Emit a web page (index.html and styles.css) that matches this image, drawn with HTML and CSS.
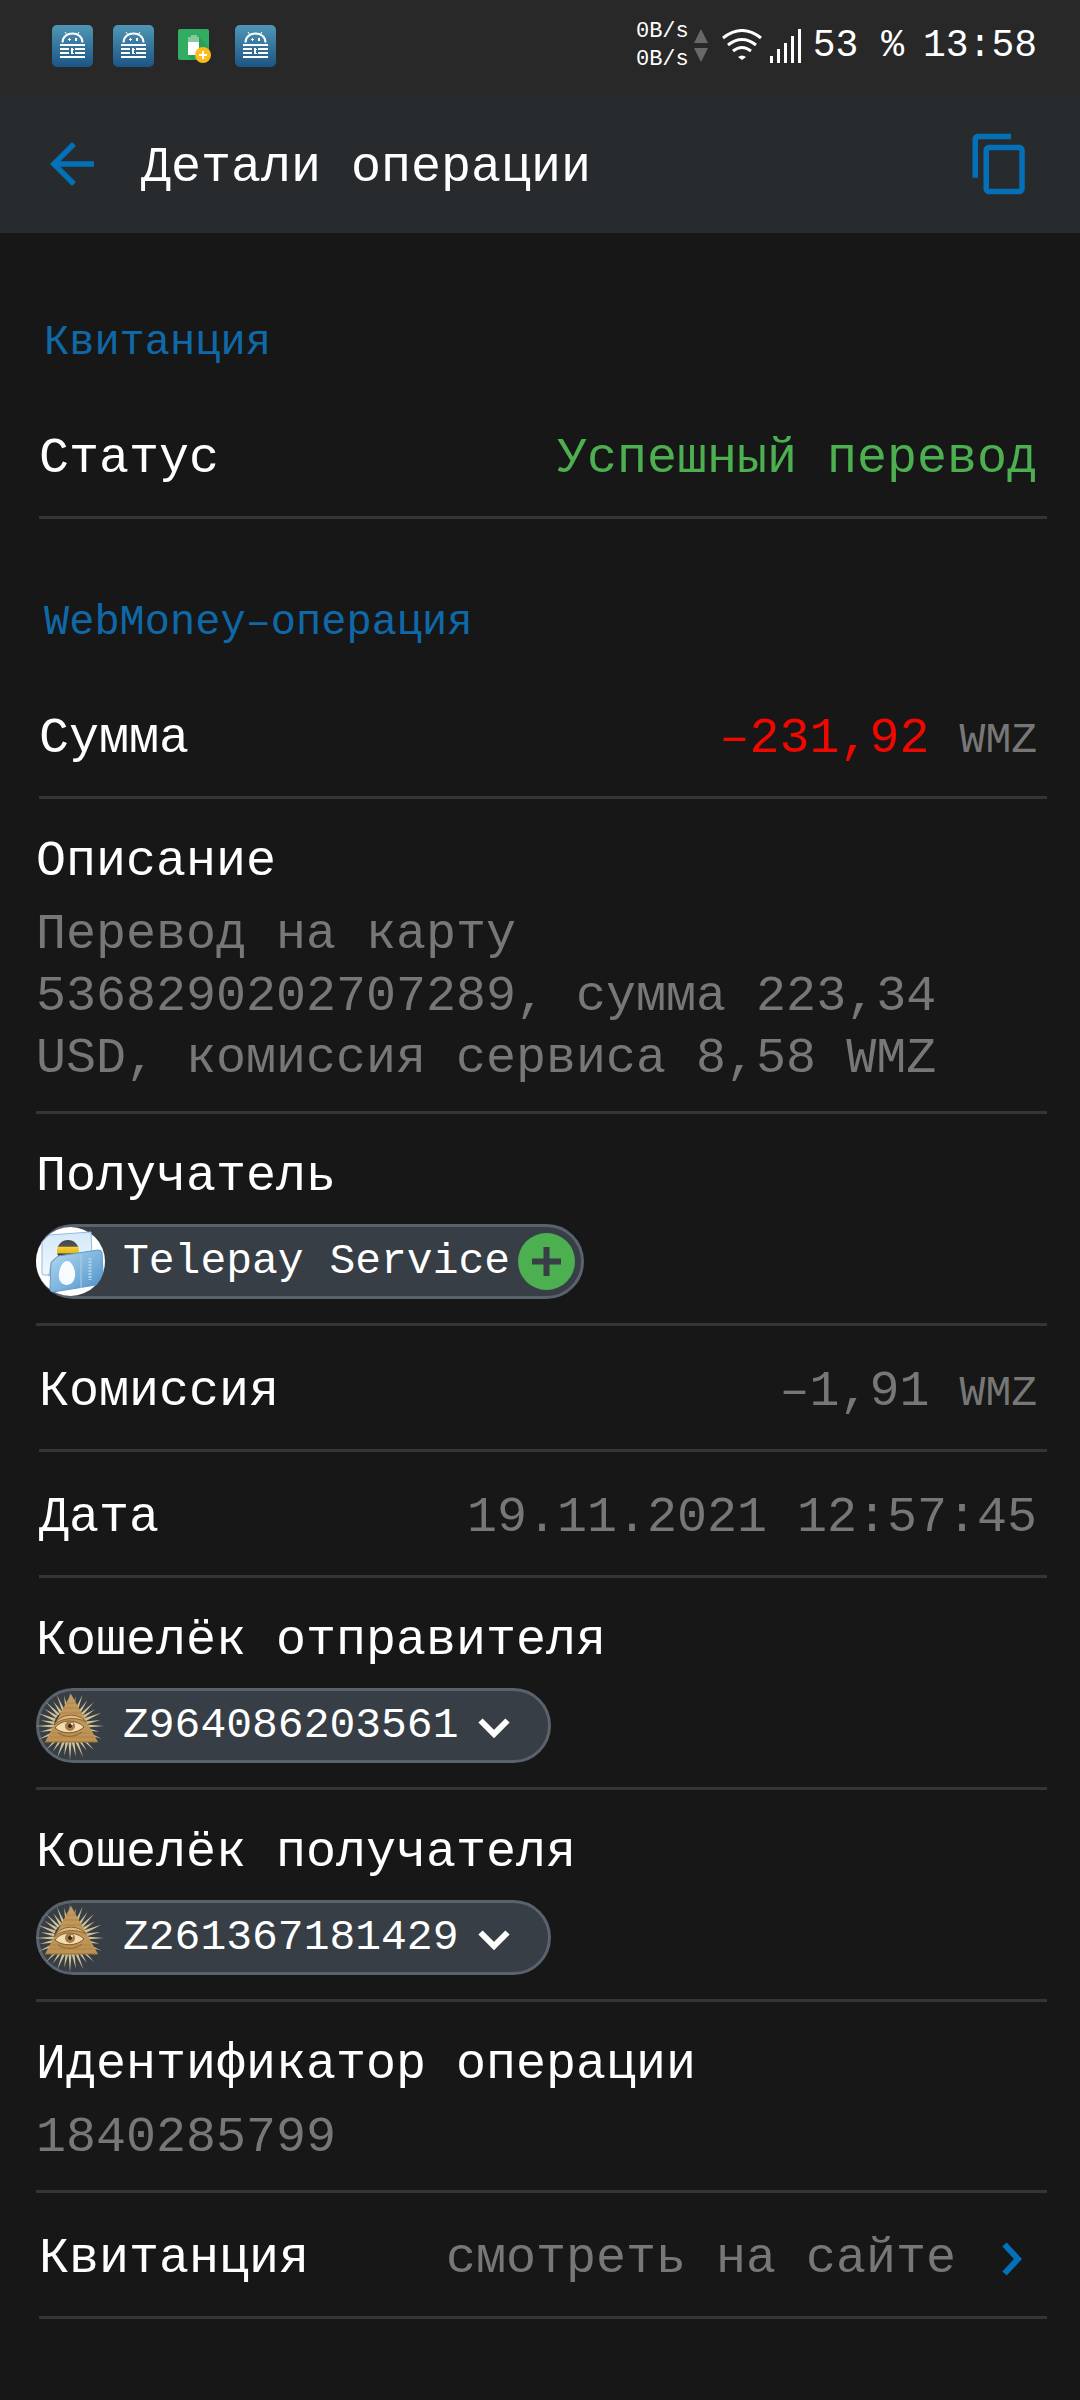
FILE: index.html
```html
<!DOCTYPE html>
<html lang="ru">
<head>
<meta charset="utf-8">
<meta name="viewport" content="width=device-width, initial-scale=1">
<title>Детали операции</title>
<link rel="stylesheet" href="styles.css">
</head>
<body>
<svg class="sprite" aria-hidden="true">
  <defs>
    <linearGradient id="keyboard-bg" x1="0" y1="0" x2="0" y2="1">
      <stop offset="0" stop-color="#4f97b5"/>
      <stop offset="1" stop-color="#1c5585"/>
    </linearGradient>
    <linearGradient id="card-front" x1="0" y1="0" x2="1" y2="1">
      <stop offset="0" stop-color="#b5daf3"/>
      <stop offset="0.6" stop-color="#76afd9"/>
      <stop offset="1" stop-color="#4a8cc4"/>
    </linearGradient>
    <linearGradient id="card-back" x1="0" y1="0" x2="0" y2="1">
      <stop offset="0" stop-color="#d3e9f9"/>
      <stop offset="1" stop-color="#f2f8fc"/>
    </linearGradient>
    <linearGradient id="bee" x1="0" y1="0" x2="0" y2="1">
      <stop offset="0" stop-color="#444"/>
      <stop offset="0.28" stop-color="#555"/>
      <stop offset="0.34" stop-color="#f4cf35"/>
      <stop offset="0.58" stop-color="#e9b91c"/>
      <stop offset="0.64" stop-color="#3b3b38"/>
      <stop offset="0.78" stop-color="#4a4637"/>
      <stop offset="0.84" stop-color="#e9b91c"/>
      <stop offset="1" stop-color="#c89a1c"/>
    </linearGradient>
    <linearGradient id="stone" x1="0" y1="0" x2="0" y2="1">
      <stop offset="0" stop-color="#c39a5e"/>
      <stop offset="1" stop-color="#bd9152"/>
    </linearGradient>
    <g id="rays">
      <path d="M-1.500 -16L0 -34L1.500 -16Z"/>
      <path d="M-1.500 -16L0 -30L1.500 -16Z" transform="rotate(11)"/>
      <path d="M-1.500 -16L0 -34L1.500 -16Z" transform="rotate(22)"/>
      <path d="M-1.500 -16L0 -31L1.500 -16Z" transform="rotate(34)"/>
    </g>
    <symbol id="keyboard" viewBox="0 0 41 42">
      <rect width="41" height="42" rx="5" fill="url(#keyboard-bg)"/>
      <path d="M10.500 17.500C10.500 5.500 30.500 5.500 30.500 17.500" fill="none" stroke="#fff" stroke-width="2"/>
      <path d="M13 7l2 3M27 7l-2 3" stroke="#fff" stroke-width="1"/>
      <path d="M16 14h3v1h-3zM17 13h1v3h-1zM23 13h2v3h-2zM8 19h25v2H8zM8 23h9v2H8zM23 23h10v2H23zM8 27h9v2H8zM23 27h10v2H23zM8 31h25v2H8zM19 23h2v6h-2zM21 24h1v1h-1zM21 28h1v1h-1z" fill="#fff"/>
    </symbol>
    <symbol id="pyramid" viewBox="0 0 69 69">
      <g fill="#cfc294" transform="translate(34 35)">
        <use href="#rays"/>
        <use href="#rays" transform="rotate(45)"/>
        <use href="#rays" transform="rotate(90)"/>
        <use href="#rays" transform="rotate(135)"/>
        <use href="#rays" transform="rotate(180)"/>
        <use href="#rays" transform="rotate(225)"/>
        <use href="#rays" transform="rotate(270)"/>
        <use href="#rays" transform="rotate(315)"/>
      </g>
      <path d="M35 3L62 51H9Z" fill="url(#stone)"/>
      <path d="M30 12h10M27 17h16M24 22h22M16 42h38M14 46h44" stroke="#a27a42" stroke-width="1" opacity=".6"/>
      <path d="M9 51h53" stroke="#8f6c3c" stroke-width="1"/>
      <path d="M18 34C24 22 42 21 50 31C42 26 26 26 18 34Z" fill="#ddbd86" stroke="#8a6230" stroke-width="1"/>
      <path d="M19 37C25 28 40 28 48 36C41 43 27 44 19 37Z" fill="#f0dcae" stroke="#7d572c" stroke-width="1"/>
      <circle cx="34" cy="35" r="5" fill="#a57b48"/>
      <circle cx="34" cy="35" r="2" fill="#3b2817"/>
      <circle cx="36" cy="33" r="1" fill="#fff"/>
      <path d="M22 42C30 47 40 46 46 41" fill="none" stroke="#8a6230" stroke-width="1"/>
    </symbol>
    <symbol id="chevron-down" viewBox="0 0 32 20">
      <path d="M2.500 2.500L16 16L29.500 2.500" fill="none" stroke="#fff" stroke-width="6"/>
    </symbol>
  </defs>
</svg>

<div class="status-bar">
  <div class="notifications" aria-hidden="true">
    <svg class="notification"><use href="#keyboard"/></svg>
    <svg class="notification"><use href="#keyboard"/></svg>
    <svg class="notification" viewBox="-4 -4 41 42">
      <rect x="0" y="0" width="31" height="31" rx="2" fill="#30ad63"/>
      <path d="M21 8l10 10v13H14L10 26z" fill="#27a05a"/>
      <path d="M13 6h6v2h2v5H10V8h3z" fill="#88c99f"/>
      <rect x="10" y="13" width="11" height="13" fill="#fff"/>
      <circle cx="25" cy="26" r="8" fill="#fbbc1c"/>
      <path d="M21 26h8M25 22v8" stroke="#fff" stroke-width="2"/>
    </svg>
    <svg class="notification"><use href="#keyboard"/></svg>
  </div>
  <div class="system">
    <div class="speed"><span>0B/s</span><span>0B/s</span></div>
    <svg class="traffic" viewBox="0 0 14 34" aria-hidden="true"><path d="M7 0l7 14H0zM0 19h14L7 33z" fill="#686868"/></svg>
    <svg class="wifi" viewBox="0 0 40 34" aria-hidden="true">
      <g fill="none" stroke="#fff" stroke-width="3">
        <path d="M1 9Q20 -6 39 9"/>
        <path d="M6 16Q20 5 34 16"/>
        <path d="M11 22Q20 15 29 22"/>
      </g>
      <path d="M16 28Q20 25 24 28L20 31Z" fill="#fff"/>
    </svg>
    <svg class="signal" viewBox="0 0 32 34" aria-hidden="true"><path d="M0 27h3v7H0zM7 20h3v14H7zM14 14h3v20h-3zM21 7h3v27h-3zM28 0h3v34h-3z" fill="#fff"/></svg>
    <span class="battery">53 %</span>
    <time class="clock">13:58</time>
  </div>
</div>

<header class="app-bar">
  <button class="icon-button" type="button" aria-label="Назад">
    <svg class="icon" viewBox="0 0 24 24"><path d="M20 11H7.830l5.590-5.590L12 4l-8 8 8 8 1.410-1.410L7.830 13H20v-2z"/></svg>
  </button>
  <h1 class="title">Детали операции</h1>
  <button class="icon-button" type="button" aria-label="Копировать">
    <svg class="icon" viewBox="0 0 24 24"><path d="M16 1H4c-1.100 0-2 .9-2 2v14h2V3h12V1zm3 4H8c-1.100 0-2 .9-2 2v14c0 1.100.9 2 2 2h11c1.100 0 2-.9 2-2V7c0-1.100-.9-2-2-2zm0 16H8V7h11v14z"/></svg>
  </button>
</header>

<main class="details">
  <section>
    <h2 class="section-title">Квитанция</h2>
    <dl class="list">
      <div class="row">
        <dt>Статус</dt>
        <dd class="success">Успешный перевод</dd>
      </div>
    </dl>
  </section>
  <section>
    <h2 class="section-title">WebMoney–операция</h2>
    <dl class="list">
      <div class="row">
        <dt>Сумма</dt>
        <dd><span class="debit">–231,92</span> <span class="currency">WMZ</span></dd>
      </div>
      <div class="row stacked">
        <dt>Описание</dt>
        <dd class="description">Перевод на карту 5368290202707289, сумма 223,34 USD, комиссия сервиса 8,58 WMZ</dd>
      </div>
      <div class="row stacked">
        <dt>Получатель</dt>
        <dd class="chip-value">
          <button class="chip contact" type="button">
            <svg class="avatar" viewBox="0 0 69 69" aria-hidden="true">
              <circle cx="34.500" cy="34.500" r="34.500" fill="#fff"/>
              <path d="M6 15L13 8L55 5L56 30L16 48H8Q6 48 6 46Z" fill="url(#card-back)" stroke="#93bbe0" stroke-width="1"/>
              <path d="M12 50L15 34L24 27L42 25L30 34Z" fill="#8296a8" opacity=".5"/>
              <circle cx="32" cy="24" r="11" fill="url(#bee)"/>
              <path d="M15 36L22 29L62 23Q66 23 66 26L67 45Q65 53 60 58L17 65Q14 65 14 62Z" fill="url(#card-front)" stroke="#5c9bd0" stroke-width="1"/>
              <path d="M45 27V61" stroke="#a9d0ee" stroke-width="1"/>
              <path d="M54 31V53" stroke="#a9d0ee" stroke-width="3" stroke-dasharray="2 1"/>
              <path d="M31 34C36 34 40 43 39 49C38 60 25 61 23 51C22 44 26 34 31 34Z" fill="#f6fbfe"/>
            </svg>
            <span>Telepay Service</span>
            <svg class="add" viewBox="0 0 57 57" aria-hidden="true"><circle cx="28.500" cy="28.500" r="28.500" fill="#4caf50"/><path d="M14 28.500h29M28.500 14v29" stroke="#373e46" stroke-width="6"/></svg>
          </button>
        </dd>
      </div>
      <div class="row">
        <dt>Комиссия</dt>
        <dd>–1,91 <span class="currency">WMZ</span></dd>
      </div>
      <div class="row">
        <dt>Дата</dt>
        <dd>19.11.2021 12:57:45</dd>
      </div>
      <div class="row stacked">
        <dt>Кошелёк отправителя</dt>
        <dd class="chip-value">
          <button class="chip wallet" type="button">
            <svg class="avatar" aria-hidden="true"><use href="#pyramid"/></svg>
            <span>Z964086203561</span>
            <svg class="expand" aria-hidden="true"><use href="#chevron-down"/></svg>
          </button>
        </dd>
      </div>
      <div class="row stacked">
        <dt>Кошелёк получателя</dt>
        <dd class="chip-value">
          <button class="chip wallet" type="button">
            <svg class="avatar" aria-hidden="true"><use href="#pyramid"/></svg>
            <span>Z261367181429</span>
            <svg class="expand" aria-hidden="true"><use href="#chevron-down"/></svg>
          </button>
        </dd>
      </div>
      <div class="row stacked">
        <dt>Идентификатор операции</dt>
        <dd>1840285799</dd>
      </div>
      <div class="row">
        <dt>Квитанция</dt>
        <dd>
          <a class="receipt-link" href="#">смотреть на сайте
            <svg class="go" viewBox="0 0 20 34" aria-hidden="true"><path d="M2.500 2.500L16 17L2.500 31.500" fill="none" stroke="#0470b8" stroke-width="6"/></svg>
          </a>
        </dd>
      </div>
    </dl>
  </section>
</main>
</body>
</html>
```

FILE: styles.css
```css
* {
  box-sizing: border-box;
}

body {
  margin: 0;
  min-height: 100vh;
  background: #171717;
  color: #fff;
  font-family: "Liberation Mono", monospace;
  font-size: 50px;
  line-height: 62px;
}

h1,
h2,
dl,
dd {
  margin: 0;
  font-weight: normal;
}

button {
  padding: 0;
  border: 0;
  background: none;
  color: inherit;
  font: inherit;
}

svg {
  display: block;
  flex: none;
}

.sprite {
  position: absolute;
  width: 0;
  height: 0;
}

/* System status bar */
.status-bar {
  display: flex;
  justify-content: space-between;
  align-items: center;
  height: 95px;
  padding: 0 43px 4px 52px;
  background: #282828;
}

.notifications {
  display: flex;
  gap: 20px;
}

.notification {
  width: 41px;
  height: 42px;
}

.system {
  display: flex;
  align-items: center;
  font-size: 38px;
  line-height: 44px;
}

.speed {
  display: flex;
  flex-direction: column;
  font-size: 22px;
  line-height: 28px;
}

.traffic {
  width: 14px;
  height: 34px;
  margin-left: 5px;
}

.wifi {
  width: 40px;
  height: 34px;
  margin-left: 14px;
}

.signal {
  width: 32px;
  height: 34px;
  margin-left: 8px;
}

.battery {
  margin-left: 11px;
}

.clock {
  margin-left: 19px;
}

/* Title bar */
.app-bar {
  display: flex;
  align-items: center;
  height: 138px;
  padding: 0 47px 0 39px;
  background: #272b2e;
}

.icon {
  width: 66px;
  height: 66px;
  fill: #0470b8;
}

.title {
  flex: 1;
  margin-left: 36px;
  padding-top: 8px;
  font-size: 50px;
}

/* Operation details */
.details {
  padding: 6px 33px 81px 36px;
}

.section-title {
  padding: 73px 0 19px 8px;
  color: #0f69a8;
  font-size: 42px;
}

.row {
  display: flex;
  justify-content: space-between;
  margin-left: 3px;
  padding: 35px 10px 26px 0;
  border-bottom: 3px solid #353535;
}

.row dd {
  color: #777;
}

.stacked {
  display: block;
  margin-left: 0;
  padding: 32px 0 21px;
}

.stacked dd {
  margin-top: 11px;
}

.description {
  max-width: 960px;
}

.row .success {
  color: #4caf50;
}

.debit {
  color: #f00800;
}

.currency {
  font-size: 43px;
  line-height: 1;
}

.row .chip-value {
  margin: 16px 0 3px;
  color: #fff;
}

.chip {
  display: flex;
  align-items: center;
  height: 75px;
  border: 3px solid #5a626c;
  border-radius: 38px;
  background: #373e46;
  font-size: 43px;
}

.contact {
  width: 548px;
}

.wallet {
  width: 515px;
}

.avatar {
  width: 69px;
  height: 69px;
  margin: 0 18px 0 -3px;
}

.add {
  width: 57px;
  height: 57px;
  margin-left: 8px;
}

.expand {
  width: 32px;
  height: 20px;
  margin: 4px 0 0 20px;
}

.receipt-link {
  display: flex;
  align-items: center;
  gap: 46px;
  padding-right: 15px;
  color: inherit;
  text-decoration: none;
}

.go {
  width: 20px;
  height: 34px;
}
```
